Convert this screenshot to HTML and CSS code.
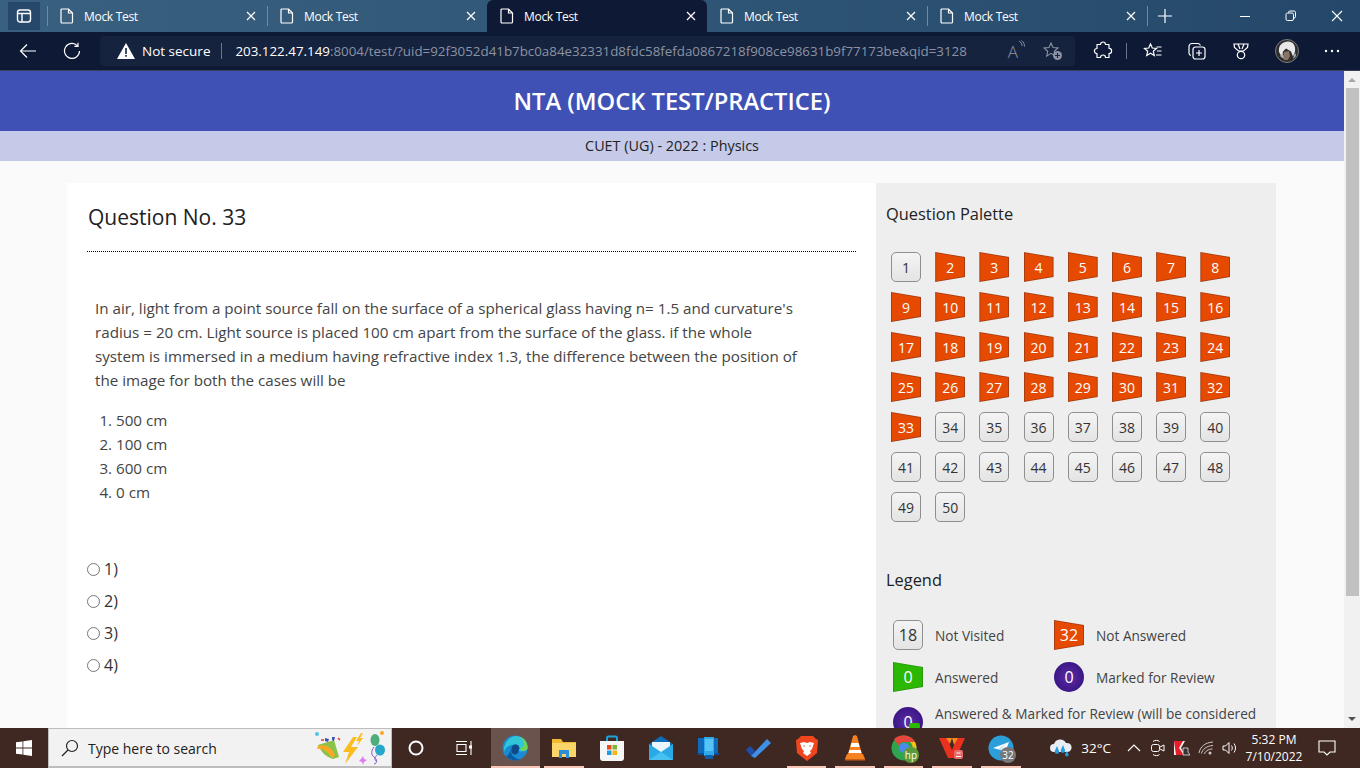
FILE: index.html
```html
<!DOCTYPE html>
<html lang="en">
<head>
  <meta charset="UTF-8">
  <title>Mock Test</title>
  <link rel="stylesheet" href="styles.css">
</head>
<body>
  <!-- browser tabs -->
  <div class="tabbar">
    <div class="tab-toggle">
      <svg width="16" height="16" viewBox="0 0 16 16" fill="none" stroke="#fff" stroke-width="1.4"><rect x="1.5" y="2" width="13" height="12" rx="2.5"/><path d="M2 5.5h12M6 5.5V14"/></svg>
    </div>
    <div class="tab">
      <svg class="doc" width="14" height="16" viewBox="0 0 14 16" fill="none" stroke="#fff" stroke-width="1.2"><path d="M2 1h6.5L12.500 5v9a1 1 0 0 1-1 1H2a1 1 0 0 1-1-1V2a1 1 0 0 1 1-1zM8.500 1v4h4"/></svg>
      <span class="tab-title">Mock Test</span>
      <svg class="tab-x" width="10" height="10" viewBox="0 0 10 10" stroke="#fff" stroke-width="1.2"><path d="M1 1l8 8M9 1l-8 8"/></svg>
    </div>
    <div class="tab">
      <svg class="doc" width="14" height="16" viewBox="0 0 14 16" fill="none" stroke="#fff" stroke-width="1.2"><path d="M2 1h6.5L12.500 5v9a1 1 0 0 1-1 1H2a1 1 0 0 1-1-1V2a1 1 0 0 1 1-1zM8.500 1v4h4"/></svg>
      <span class="tab-title">Mock Test</span>
      <svg class="tab-x" width="10" height="10" viewBox="0 0 10 10" stroke="#fff" stroke-width="1.2"><path d="M1 1l8 8M9 1l-8 8"/></svg>
    </div>
    <div class="tab active">
      <svg class="doc" width="14" height="16" viewBox="0 0 14 16" fill="none" stroke="#fff" stroke-width="1.2"><path d="M2 1h6.5L12.500 5v9a1 1 0 0 1-1 1H2a1 1 0 0 1-1-1V2a1 1 0 0 1 1-1zM8.500 1v4h4"/></svg>
      <span class="tab-title">Mock Test</span>
      <svg class="tab-x" width="10" height="10" viewBox="0 0 10 10" stroke="#fff" stroke-width="1.2"><path d="M1 1l8 8M9 1l-8 8"/></svg>
    </div>
    <div class="tab no-sep">
      <svg class="doc" width="14" height="16" viewBox="0 0 14 16" fill="none" stroke="#fff" stroke-width="1.2"><path d="M2 1h6.5L12.500 5v9a1 1 0 0 1-1 1H2a1 1 0 0 1-1-1V2a1 1 0 0 1 1-1zM8.500 1v4h4"/></svg>
      <span class="tab-title">Mock Test</span>
      <svg class="tab-x" width="10" height="10" viewBox="0 0 10 10" stroke="#fff" stroke-width="1.2"><path d="M1 1l8 8M9 1l-8 8"/></svg>
    </div>
    <div class="tab">
      <svg class="doc" width="14" height="16" viewBox="0 0 14 16" fill="none" stroke="#fff" stroke-width="1.2"><path d="M2 1h6.5L12.500 5v9a1 1 0 0 1-1 1H2a1 1 0 0 1-1-1V2a1 1 0 0 1 1-1zM8.500 1v4h4"/></svg>
      <span class="tab-title">Mock Test</span>
      <svg class="tab-x" width="10" height="10" viewBox="0 0 10 10" stroke="#fff" stroke-width="1.2"><path d="M1 1l8 8M9 1l-8 8"/></svg>
    </div>
    <div class="tab-new">
      <svg width="14" height="14" viewBox="0 0 14 14" stroke="#fff" stroke-width="1.2"><path d="M7 0v14M0 7h14"/></svg>
    </div>
    <div class="win-btns">
      <div class="win-btn"><svg width="12" height="12" viewBox="0 0 12 12" stroke="#fff" stroke-width="1"><path d="M1 6.500h10"/></svg></div>
      <div class="win-btn"><svg width="12" height="12" viewBox="0 0 12 12" fill="none" stroke="#fff" stroke-width="1"><rect x="1" y="3" width="7.500" height="7.500" rx="1.500"/><path d="M3.500 3V2.500a1.500 1.500 0 0 1 1.500-1.500h4a1.500 1.500 0 0 1 1.500 1.500v4A1.500 1.500 0 0 1 9 8"/></svg></div>
      <div class="win-btn"><svg width="12" height="12" viewBox="0 0 12 12" stroke="#fff" stroke-width="1.100"><path d="M1 1l10 10M11 1L1 11"/></svg></div>
    </div>
  </div>

  <!-- address row -->
  <div class="toolbar">
    <div class="nav-btn"><svg width="18" height="16" viewBox="0 0 18 16" fill="none" stroke="#fff" stroke-width="1.200"><path d="M17 8H1.500M8 1.500L1.500 8 8 14.500"/></svg></div>
    <div class="nav-btn"><svg width="18" height="18" viewBox="0 0 18 18" fill="none" stroke="#fff" stroke-width="1.200"><path d="M14.500 3.800A7.500 7.500 0 1 0 16.500 9M15 .8v3.600h-3.600"/></svg></div>
    <div class="address">
      <svg class="warn" width="18" height="16" viewBox="0 0 18 16"><path d="M9 0l9 16H0z" fill="#fff"/><path d="M8.200 5h1.600v6H8.200zM8.200 12h1.600v1.800H8.200z" fill="#15233f"/></svg>
      <span class="not-secure">Not secure</span>
      <span class="addr-div"></span>
      <span class="url"><b>203.122.47.149</b>:8004/test/?uid=92f3052d41b7bc0a84e32331d8fdc58fefda0867218f908ce98631b9f77173be&amp;qid=3128</span>
      <span class="read-icon">A<svg width="7" height="9" viewBox="0 0 7 9" fill="none" stroke="#8b93a3" stroke-width="1"><path d="M1 1c2 1 3 3 3 5M3.500 .5C5.500 2 6.500 4 6.500 6.500"/></svg></span>
      <svg class="fav-add" width="20" height="20" viewBox="0 0 20 20"><path d="M8 2l2 4.500 5 .5-3.700 3.300 1 4.800L8 12.300l-4.300 2.800 1-4.800L1 7l5-.5z" fill="none" stroke="#8b93a3" stroke-width="1.100"/><circle cx="14.500" cy="14.500" r="4.500" fill="#8b93a3"/><path d="M12 14.500h5M14.500 12v5" stroke="#15233f" stroke-width="1.100"/></svg>
    </div>
    <div class="tools">
      <svg class="tool" width="20" height="20" viewBox="0 0 20 20" fill="none" stroke="#fff" stroke-width="1.200"><path d="M7.500 3.500a2.500 2.500 0 0 1 5 0h3.500v3.800a2.600 2.600 0 0 1 0 5.200V16.500h-3.500a2.500 2.500 0 0 0-5 0H4v-3.800a2.600 2.600 0 0 1 0-5.200V3.500z" stroke-linejoin="round"/></svg>
      <span class="tool-sep"></span>
      <svg class="tool" width="20" height="20" viewBox="0 0 20 20" fill="none" stroke="#fff" stroke-width="1.200"><path d="M7.500 3l1.800 4 4.200.4-3.200 2.900 1 4.200-3.800-2.300-3.800 2.300 1-4.200L1.500 7.400 5.700 7zM13.500 6h5M14 10h4.500M13 14h5.500"/></svg>
      <svg class="tool" width="20" height="20" viewBox="0 0 20 20" fill="none" stroke="#fff" stroke-width="1.200"><path d="M4 14.500A2.500 2.500 0 0 1 2 12V5.500A3 3 0 0 1 5 2.500h6a2.500 2.500 0 0 1 2.400 2"/><rect x="6" y="6" width="12" height="12" rx="2.500"/><path d="M12 9v6M9 12h6"/></svg>
      <svg class="tool" width="20" height="20" viewBox="0 0 20 20" fill="none" stroke="#fff" stroke-width="1.200"><path d="M3 3h14l-.5 3.500L12.500 10h-5L3.500 6.500zM7 3l2 5M13 3l-2 5"/><circle cx="10" cy="14" r="3.700"/></svg>
      <svg class="avatar" width="24" height="24" viewBox="0 0 24 24"><circle cx="12" cy="12" r="11.500" fill="#2e2e2e" stroke="#7d7d7d"/><path d="M4 13C3 6 8 2.500 13 2.500s8 4 7 10l-2 5-2-5-5-3-3 3-1 6z" fill="#e8e8e8"/><path d="M9 13l5-1 1 5-2 4H9z" fill="#8a7360"/><path d="M5 17l3-4 1 7zM20 13l1 4-3 3z" fill="#b5b5b5"/></svg>
      <svg class="tool last" width="20" height="20" viewBox="0 0 20 20" fill="#fff"><circle cx="4" cy="10" r="1.200"/><circle cx="10" cy="10" r="1.200"/><circle cx="16" cy="10" r="1.200"/></svg>
    </div>
  </div>

  <!-- page inside the browser -->
  <div class="viewport">
    <div class="page">
      <header class="site-head">NTA (MOCK TEST/PRACTICE)</header>
      <div class="sub-head">CUET (UG) - 2022 : Physics</div>
      <div class="wrap">
        <section class="question">
          <h2 class="q-title">Question No. 33</h2>
          <div class="q-body">
            <p>In air, light from a point source fall on the surface of a spherical glass having n= 1.5 and curvature's radius = 20 cm. Light source is placed 100 cm apart from the surface of the glass. if the whole system is immersed in a medium having refractive index 1.3, the difference between the position of the image for both the cases will be</p>
            <ol>
              <li>500 cm</li>
              <li>100 cm</li>
              <li>600 cm</li>
              <li>0 cm</li>
            </ol>
          </div>
          <div class="options">
            <label class="option"><span class="radio"></span>1)</label>
            <label class="option"><span class="radio"></span>2)</label>
            <label class="option"><span class="radio"></span>3)</label>
            <label class="option"><span class="radio"></span>4)</label>
          </div>
        </section>
        <aside class="palette">
          <h3 class="pal-title">Question Palette</h3>
          <div class="pal-grid">
            <span class="qb grey">1</span>
            <span class="qb red">2</span><span class="qb red">3</span><span class="qb red">4</span><span class="qb red">5</span><span class="qb red">6</span><span class="qb red">7</span><span class="qb red">8</span>
            <span class="qb red">9</span><span class="qb red">10</span><span class="qb red">11</span><span class="qb red">12</span><span class="qb red">13</span><span class="qb red">14</span><span class="qb red">15</span><span class="qb red">16</span>
            <span class="qb red">17</span><span class="qb red">18</span><span class="qb red">19</span><span class="qb red">20</span><span class="qb red">21</span><span class="qb red">22</span><span class="qb red">23</span><span class="qb red">24</span>
            <span class="qb red">25</span><span class="qb red">26</span><span class="qb red">27</span><span class="qb red">28</span><span class="qb red">29</span><span class="qb red">30</span><span class="qb red">31</span><span class="qb red">32</span>
            <span class="qb red">33</span>
            <span class="qb grey">34</span><span class="qb grey">35</span><span class="qb grey">36</span><span class="qb grey">37</span><span class="qb grey">38</span><span class="qb grey">39</span><span class="qb grey">40</span>
            <span class="qb grey">41</span><span class="qb grey">42</span><span class="qb grey">43</span><span class="qb grey">44</span><span class="qb grey">45</span><span class="qb grey">46</span><span class="qb grey">47</span><span class="qb grey">48</span>
            <span class="qb grey">49</span><span class="qb grey">50</span>
          </div>
          <h3 class="legend-title">Legend</h3>
          <div class="legend">
            <div class="leg-item"><span class="qb grey big">18</span>Not Visited</div>
            <div class="leg-item"><span class="qb red big">32</span>Not Answered</div>
            <div class="leg-item"><span class="qb green big">0</span>Answered</div>
            <div class="leg-item"><span class="qb purple big">0</span>Marked for Review</div>
            <div class="leg-item wide"><span class="qb purple big tick">0</span><span>Answered &amp; Marked for Review (will be considered for evaluation)</span></div>
          </div>
        </aside>
      </div>
    </div>
    <div class="scrollbar">
      <span class="sb-arrow up"></span>
      <span class="sb-thumb"></span>
      <span class="sb-arrow down"></span>
    </div>
  </div>

  <!-- windows taskbar -->
  <div class="taskbar">
    <div class="start">
      <svg width="16" height="16" viewBox="0 0 16 16" fill="#fff"><path d="M0 2.300l6.500-.9v6.200H0zM7.300 1.300L16 0v7.600H7.300zM0 8.400h6.500v6.200L0 13.700zM7.300 8.400H16V16l-8.700-1.300z"/></svg>
    </div>
    <div class="search">
      <svg width="18" height="18" viewBox="0 0 18 18" fill="none" stroke="#222" stroke-width="1.200"><circle cx="11" cy="7" r="5.500"/><path d="M7 11l-6 6"/></svg>
      <span class="search-text">Type here to search</span>
      <svg class="stickers" width="74" height="34" viewBox="0 0 74 34">
        <circle cx="3" cy="3" r="2" fill="#4fc3e8"/>
        <path d="M4 14l16-5 5 17-6 2C12 26 7 21 4 14z" fill="#8bc34a"/>
        <path d="M4 15c6-2 13 0 17 9l-3 3C13 20 9 17 3 18z" fill="#f9a825"/>
        <path d="M11 7l4 1-1 3-3-1zM18 6l3 0-1 4-2-1z" fill="#3f51b5"/>
        <path d="M7 9h3M24 7l2 2" stroke="#e53935" stroke-width="1.500"/>
        <path d="M39 6L29 21h6l-4 12 13-17h-7l6-10z" fill="#fbbc1d"/>
        <path d="M47 2l-5 8h3l-2 5 6-8h-3l3-5z" fill="#fbbc1d"/>
        <path d="M45 30l2-2 2-3 1 3 3 1-3 2-1 3-1-3z" fill="#e279ee"/>
        <ellipse cx="61" cy="9" rx="4.500" ry="6" fill="#4cae7a"/>
        <ellipse cx="66" cy="19" rx="5" ry="5.500" fill="#26a6c9"/>
        <circle cx="68" cy="2" r="2" fill="#f9a825"/>
        <path d="M60 16c-3 4-3 8 0 10s4 6 0 7M63 24c-2 2-3 4-1 6" fill="none" stroke="#7e57c2" stroke-width="1"/>
      </svg>
    </div>
    <div class="task-sys"><svg width="16" height="16" viewBox="0 0 16 16" fill="none" stroke="#fff" stroke-width="2"><circle cx="8" cy="8" r="6.500"/></svg></div>
    <div class="task-sys"><svg width="16" height="16" viewBox="0 0 16 16" fill="none" stroke="#fff" stroke-width="1.100"><path d="M0 1.500h11M0 14.500h11M1 4.500h9v7H1zM15 1v14"/><rect x="13" y="5.500" width="3" height="3" fill="#fff" stroke="none"/></svg></div>
    <div class="apps">
      <div class="app on lit">
        <svg width="26" height="26" viewBox="0 0 26 26"><circle cx="13" cy="13" r="12.500" fill="#1a8ad4"/><path d="M2 17C1 8 8 1 14 1c7 0 11.500 5 11.500 11 0 3-3 4.500-6 4.500-2 0-3-1-3-1 2-2 1-6-4-6C7 9.500 3 13 2 17z" fill="#2fc7d8"/><path d="M25.500 12c0-5-4-9-8-10 3 2 5 5 4.500 8-.5 2-2 3-4 3 .5 2 2.500 3.500 4.500 3 2-.3 3.500-2 3-4z" fill="#6ed35a"/><path d="M9 14c-1 5 3 10 9 10.500C15 26 8 26.500 4 21c2 0 4-3 5-7z" fill="#0c59a4"/><path d="M9.500 14c0-3 2-5 4.500-4.500 3.500 .5 4 4 2.500 6 0 0 .5 4-4 4-2 0-3.500-3-3-5.500z" fill="#114a8b"/></svg>
      </div>
      <div class="app on">
        <svg width="26" height="24" viewBox="0 0 26 24"><path d="M1 3h9l2 3h13v15H1z" fill="#f2b82e"/><path d="M1 7h24v14H1z" fill="#fbd56a"/><path d="M8 22v-8h10v8h-3v-4h-4v4z" fill="#2a8fd6"/></svg>
      </div>
      <div class="app">
        <svg width="24" height="26" viewBox="0 0 24 26"><path d="M7 7V3a1.500 1.500 0 0 1 1.500-1.500h7A1.500 1.500 0 0 1 17 3v4" fill="none" stroke="#1aa3dd" stroke-width="2"/><path d="M0 6h24v17a3 3 0 0 1-3 3H3a3 3 0 0 1-3-3z" fill="#f6f6f6"/><path d="M7 10h4.500v4.500H7z" fill="#e8491d"/><path d="M12.500 10H17v4.500h-4.500z" fill="#7db43a"/><path d="M7 15.500h4.500V20H7z" fill="#1a9fe0"/><path d="M12.500 15.500H17V20h-4.500z" fill="#fbb612"/></svg>
      </div>
      <div class="app">
        <svg width="24" height="24" viewBox="0 0 24 24"><path d="M12 0l12 8v16H0V8z" fill="#0d6fb8"/><path d="M3 6h18v7l-9 6-9-6z" fill="#e9f6fd"/><path d="M0 8l12 8 12-8v16H0z" fill="#29a9e6"/><path d="M0 24l12-8 12 8z" fill="#48c0f0"/></svg>
      </div>
      <div class="app">
        <svg width="24" height="24" viewBox="0 0 24 24"><path d="M1 2h20v15H1z" fill="#0f6cbd"/><path d="M0 17h23l-1 2H1z" fill="#0a4f94"/><path d="M7 1h10v19H7z" fill="#31a9e8"/><path d="M8 3h8v12H8z" fill="#58c4f5"/><path d="M8 19h8v4H8z" fill="#0f5fa8"/></svg>
      </div>
      <div class="app">
        <svg width="26" height="20" viewBox="0 0 26 20"><path d="M1 12l4-4 5 5-4 5z" fill="#1b4fae"/><path d="M6 18L22 1l4 4L10 20z" fill="#3d8fe8"/></svg>
      </div>
      <div class="app on">
        <svg width="22" height="26" viewBox="0 0 22 26"><path d="M5 1h12l3 3 2 1-1 13-10 8-10-8L0 5l2-1z" fill="#f1461d"/><path d="M4 8l4-1 3 1 3-1 4 1-2 6-2 2 1 2-4 3-4-3 1-2-2-2z" fill="#fff"/><path d="M7 10l2 1-1 1zM15 10l-2 1 1 1z" fill="#f1461d"/></svg>
      </div>
      <div class="app on">
        <svg width="22" height="26" viewBox="0 0 22 26"><path d="M11 0l2 1 5 18H4L9 1z" fill="#f58220"/><path d="M7.500 8h7l1 4h-9zM5.500 15h11l1 3h-13z" fill="#fff"/><path d="M3 19h16l2 5H1z" fill="#f58220"/><path d="M1 24h20v1.500H1z" fill="#c85f12"/></svg>
      </div>
      <div class="app on badge-app">
        <svg width="26" height="26" viewBox="0 0 26 26"><circle cx="13" cy="13" r="12.500" fill="#2fa44f"/><path d="M13 .5A12.500 12.500 0 0 1 24 7H13a6 6 0 0 0-5.500 3.500L3 4a12.500 12.500 0 0 1 10-3.500z" fill="#e6463c"/><path d="M24 7a12.500 12.500 0 0 1-9 18l5-9a6 6 0 0 0-1-9z" fill="#fbc012"/><circle cx="13" cy="13" r="5" fill="#4a8af0"/></svg>
        <span class="hp">hp</span>
      </div>
      <div class="app on">
        <svg width="26" height="24" viewBox="0 0 26 24"><path d="M0 2h8l5 12L18 2h8l-9 20h-8z" fill="#e8311f"/><path d="M7 2h6l-2 6zM13 2h6l-4 7z" fill="#f68b1f"/><rect x="15" y="14" width="9" height="9" rx="2" fill="#e86a6a"/><path d="M17 20.500h5M17.500 17h4" stroke="#fff" stroke-width="1.200"/></svg>
      </div>
      <div class="app on badge-app">
        <svg width="26" height="26" viewBox="0 0 26 26"><circle cx="13" cy="13" r="12.500" fill="#2a9fd9"/><path d="M5 13l16-6-5 13-3-5z" fill="#fff"/><path d="M10 14l8-5-5 6z" fill="#c8e4f4"/></svg>
        <span class="tg-count">32</span>
      </div>
    </div>
    <div class="tray">
      <div class="weather">
        <svg width="24" height="20" viewBox="0 0 24 20"><path d="M5 14a4 4 0 0 1 0-8 6.500 6.500 0 0 1 12-1 4.500 4.500 0 0 1 2 9z" fill="#e8eef4"/><path d="M8 8l2 5a2.200 2.200 0 1 1-4.200 0zM14 7l2 5a2.200 2.200 0 1 1-4.200 0zM18 13l1.500 3a1.800 1.800 0 1 1-3.400 0z" fill="#2a9bdc"/></svg>
        <span>32°C</span>
      </div>
      <svg class="tray-ico chev" width="14" height="8" viewBox="0 0 14 8" fill="none" stroke="#fff" stroke-width="1.200"><path d="M1 7l6-6 6 6"/></svg>
      <svg class="tray-ico" width="16" height="18" viewBox="0 0 16 18" fill="none" stroke="#fff" stroke-width="1"><rect x="1.500" y="5.500" width="8" height="7" rx="2"/><path d="M10 8l4-2v6l-4-2M3 2.500C5 1 8 1 9.500 2.500M3 15.500c2 1.500 5 1.500 6.500 0"/></svg>
      <svg class="tray-ico" width="16" height="16" viewBox="0 0 16 16"><path d="M0 1h6l5 0-4 7 4 7H0z" fill="#f4f4f4"/><path d="M0 1h9L5 8l5 7H2z" fill="#e41e2a"/><path d="M9 8h5v4l2 3H9z" fill="#333" stroke="#fff" stroke-width=".7"/></svg>
      <svg class="tray-ico" width="16" height="14" viewBox="0 0 16 14" fill="none" stroke="#ccc" stroke-width="1"><path d="M1 12C2 6 7 1.500 15 1M3.500 12.500C4.500 8.500 8 5 15 4.500M6.500 13C7 10.500 10 8 14.500 8"/><circle cx="12" cy="12" r="1.500" fill="#ccc" stroke="none"/></svg>
      <svg class="tray-ico vol" width="16" height="14" viewBox="0 0 16 14" fill="none" stroke="#fff" stroke-width="1"><path d="M1 5h2.500L7 1.500v11L3.500 9H1zM9.500 4.500c1 1.500 1 3.500 0 5M12 2.500c2 2.500 2 6.500 0 9"/></svg>
      <div class="clock"><span>5:32 PM</span><span>7/10/2022</span></div>
      <div class="notif"><svg width="18" height="16" viewBox="0 0 18 16" fill="none" stroke="#fff" stroke-width="1.100"><path d="M1 1h16v11h-5l-3 3-3-3H1z"/></svg></div>
    </div>
  </div>
</body>
</html>
```

FILE: styles.css
```css
* {
  box-sizing: border-box;
}

html, body {
  margin: 0;
  height: 100%;
  overflow: hidden;
}

body {
  font-family: "Open Sans", "Liberation Sans", sans-serif;
  display: flex;
  flex-direction: column;
  background: #fafafa;
}

/* browser tabs */
.tabbar {
  display: flex;
  align-items: stretch;
  height: 32px;
  flex: none;
  background: linear-gradient(90deg, #3a6080, #2f5676 50%, #25486a);
  color: #fff;
}

.tab-toggle {
  width: 32px;
  height: 28px;
  margin: 2px 7px 2px 8px;
  display: flex;
  align-items: center;
  justify-content: center;
  background: #27486a;
}

.tab {
  width: 220px;
  display: flex;
  align-items: center;
  padding: 0 12px;
  font-size: 12px;
  border-left: 1px solid #6d8aa3;
  background-clip: padding-box;
  margin: 6px 0;
}

.tab.no-sep {
  border-left: 0;
  padding-left: 13px;
}

.tab.active {
  background: #0e1a35;
  border: 0;
  border-radius: 6px 6px 0 0;
  margin: 0;
  padding-left: 13px;
}

.tab-title {
  margin-left: 10px;
  flex: 1;
  letter-spacing: -.3px;
}

.tab-x {
  margin-right: -1px;
}

.tab-new {
  width: 34px;
  display: flex;
  align-items: center;
  justify-content: center;
  border-left: 1px solid #6d8aa3;
  margin: 6px 0;
}

.win-btns {
  margin-left: auto;
  display: flex;
}

.win-btn {
  width: 46px;
  display: flex;
  align-items: center;
  justify-content: center;
}

/* address row */
.toolbar {
  display: flex;
  align-items: center;
  height: 38px;
  flex: none;
  background: #0e1a35;
  padding-left: 8px;
}

.nav-btn {
  width: 40px;
  height: 30px;
  margin-right: 4px;
  display: flex;
  align-items: center;
  justify-content: center;
}

.address {
  width: 975px;
  height: 30px;
  flex: none;
  margin-left: 4px;
  display: flex;
  align-items: center;
  background: #15233f;
  border-radius: 4px;
  padding: 0 12px 0 17px;
  color: #fff;
  font-size: 13.500px;
}

.not-secure {
  margin-left: 7px;
}

.addr-div {
  width: 1px;
  height: 16px;
  background: #6b7488;
  margin: 0 13px 0 11px;
}

.url {
  font-size: 13.350px;
  color: #8b93a3;
  white-space: nowrap;
}

.url b {
  color: #fff;
  font-weight: 400;
}

.read-icon {
  margin-left: auto;
  color: #8b93a3;
  font-size: 17px;
  font-weight: 300;
  display: flex;
  align-items: flex-start;
  margin-right: 18px;
}

.tools {
  display: flex;
  align-items: center;
  margin-left: 18px;
}

.tool {
  margin-right: 24px;
}

.tool.last {
  margin-right: 0;
}

.tool-sep {
  width: 1px;
  height: 16px;
  background: #6b7488;
  margin: 0 16px 0 -11px;
}

.avatar {
  margin-right: 23px;
}

/* page inside the browser */
.viewport {
  flex: 1;
  min-height: 0;
  display: flex;
  border-top: 1px solid #3b3f5c;
}

.page {
  flex: 1;
  min-width: 0;
  overflow: hidden;
  background: #fafafa;
}

.site-head {
  height: 60px;
  padding-bottom: 1px;
  background: #3f51b5;
  color: #fff;
  font-size: 23.700px;
  font-weight: 600;
  display: flex;
  align-items: center;
  justify-content: center;
}

.sub-head {
  height: 30px;
  padding-bottom: 2px;
  background: #c5cae9;
  color: #222;
  font-size: 14.400px;
  display: flex;
  align-items: center;
  justify-content: center;
}

.wrap {
  width: 1209px;
  margin: 22px 0 0 67px;
  display: flex;
  height: 700px;
}

.question {
  width: 809px;
  background: #fff;
  padding: 0 20px;
}

.q-title {
  margin: 0;
  height: 69px;
  padding: 20px 0 0 1px;
  font-size: 21px;
  font-weight: 400;
  line-height: 29px;
  color: #212121;
  border-bottom: 1px dotted #000;
}

.q-body {
  padding: 44px 56px 0 8px;
  font-size: 15.200px;
  line-height: 24px;
  color: #444;
}

.q-body p {
  margin: 0 0 16px;
}

.q-body ol {
  margin: 0;
  padding-left: 21px;
}

.options {
  margin-top: 49px;
  color: #333;
  font-size: 16px;
}

.option {
  display: flex;
  align-items: center;
  height: 32px;
}

.radio {
  width: 13px;
  height: 13px;
  border: 1px solid #767676;
  border-radius: 50%;
  margin-right: 4px;
  background: #fff;
}

.palette {
  width: 400px;
  background: #eee;
  padding: 0 10px;
}

.pal-title, .legend-title {
  margin: 0;
  font-size: 16.400px;
  font-weight: 400;
  color: #222;
  line-height: 22px;
}

.pal-title {
  padding-top: 20px;
}

.pal-grid {
  display: grid;
  grid-template-columns: repeat(8, 30px);
  column-gap: 14.200px;
  row-gap: 10px;
  margin: 27px 0 0 5px;
}

.qb {
  width: 30px;
  height: 30px;
  display: flex;
  align-items: center;
  justify-content: center;
  font-size: 14px;
  flex: none;
  position: relative;
  z-index: 0;
}

.qb.grey {
  border: 1px solid #8f8f8f;
  border-radius: 5px;
  background: linear-gradient(#f4f4f4, #e4e4e4);
  color: #333;
}

.qb.red, .qb.green {
  color: #fff;
  clip-path: polygon(0 0, 100% 17%, 100% 83%, 0 100%);
}

.qb.red {
  background: #a83c12;
}

.qb.green {
  background: #2a9a0c;
}

.qb.red::before, .qb.green::before {
  content: "";
  position: absolute;
  inset: 1px;
  z-index: -1;
  clip-path: polygon(0 0, 100% 17%, 100% 83%, 0 100%);
}

.qb.red::before {
  background: #e64a00;
}

.qb.green::before {
  background: #2cb800;
}

.qb.purple {
  color: #fff;
  border-radius: 50%;
  background: radial-gradient(circle at 50% 50%, #5e2ca5, #3b1686 70%, #2b1066);
}

.qb.big {
  font-size: 16px;
}

.qb.tick::after {
  content: "";
  position: absolute;
  right: 3px;
  bottom: 8px;
  width: 11px;
  height: 6px;
  background: #2cb800;
  border-radius: 2px;
}

.legend-title {
  margin-top: 47px;
}

.legend {
  display: grid;
  grid-template-columns: 161px 1fr;
  row-gap: 12px;
  margin: 29px 0 0 7px;
  font-size: 13.650px;
  color: #444;
}

.leg-item {
  display: flex;
  align-items: center;
  gap: 12px;
  min-height: 30px;
}

.leg-item.wide {
  grid-column: 1 / 3;
  line-height: 20px;
  align-items: flex-start;
}

.leg-item.wide .qb {
  margin-top: 3px;
}

.scrollbar {
  width: 16px;
  flex: none;
  background: #f1f1f1;
  display: flex;
  flex-direction: column;
  align-items: center;
}

.sb-thumb {
  width: 13px;
  height: 508px;
  background: #c1c1c1;
  margin-top: 6px;
}

.sb-arrow {
  width: 0;
  height: 0;
  border-left: 4px solid transparent;
  border-right: 4px solid transparent;
  margin-top: 7px;
}

.sb-arrow.up {
  border-bottom: 4px solid #a3a3a3;
}

.sb-arrow.down {
  border-top: 4px solid #505050;
  margin-top: auto;
  margin-bottom: 7px;
}

/* windows taskbar */
.taskbar {
  height: 40px;
  flex: none;
  background: #402822;
  display: flex;
  align-items: center;
  color: #fff;
}

.start {
  width: 48px;
  height: 40px;
  display: flex;
  align-items: center;
  justify-content: center;
}

.search {
  width: 344px;
  height: 40px;
  background: #f2f2f2;
  border: 1px solid #bdbdbd;
  border-bottom-width: 2px;
  display: flex;
  align-items: center;
  padding-left: 12px;
  color: #222;
  font-size: 14px;
}

.search-text {
  margin: 2px 0 0 9px;
}

.stickers {
  margin-left: auto;
  margin-right: 3px;
}

.task-sys {
  width: 48px;
  display: flex;
  justify-content: center;
}

.apps {
  display: flex;
  margin-left: 3px;
}

.app {
  width: 48.550px;
  height: 40px;
  display: flex;
  align-items: center;
  justify-content: center;
  position: relative;
}

.app.lit {
  background: #6a534d;
}

.app.on::after {
  content: "";
  position: absolute;
  left: 4.500px;
  right: 4.500px;
  bottom: 0;
  height: 2px;
  background: #f6c6b6;
}

.app.lit::after {
  left: 0;
  right: 0;
}

.hp, .tg-count {
  position: absolute;
  right: 9px;
  bottom: 5px;
  width: 16px;
  height: 16px;
  border-radius: 50%;
  font-size: 10px;
  display: flex;
  align-items: center;
  justify-content: center;
  color: #fff;
}

.hp {
  background: #5a9a3c;
}

.tg-count {
  background: #777;
}

.tray {
  margin-left: auto;
  padding-right: 17px;
  display: flex;
  align-items: center;
  height: 40px;
}

.weather {
  display: flex;
  align-items: center;
  gap: 8px;
  font-size: 13.500px;
  margin-right: 16px;
}

.tray-ico {
  margin-right: 8px;
}

.tray-ico.chev {
  margin-right: 9px;
}

.tray-ico.vol {
  margin-right: 5px;
}

.clock {
  display: flex;
  flex-direction: column;
  align-items: center;
  font-size: 12px;
  line-height: 17px;
  width: 62px;
}

.notif {
  width: 32px;
  margin-left: 6px;
  display: flex;
  justify-content: center;
}
```
